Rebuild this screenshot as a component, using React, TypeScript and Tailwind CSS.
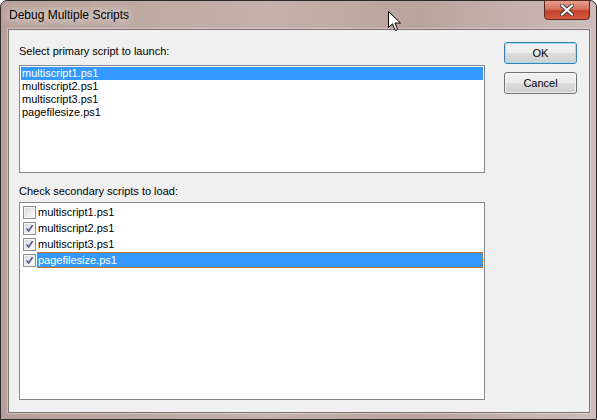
const primary = ['multiscript1.ps1', 'multiscript2.ps1', 'multiscript3.ps1', 'pagefilesize.ps1']

const secondary = [
  { name: 'multiscript1.ps1', checked: false },
  { name: 'multiscript2.ps1', checked: true },
  { name: 'multiscript3.ps1', checked: true },
  { name: 'pagefilesize.ps1', checked: true },
]

function Checkbox({ checked }: { checked: boolean }) {
  return (
    <span className="flex h-[13px] w-[13px] shrink-0 items-center justify-center border border-[#8e8f8f] bg-white">
      <span className="relative flex h-[11px] w-[11px] items-center justify-center border border-[#f4f4f4] bg-[linear-gradient(135deg,#dcdcdc,#fbfbfb)]">
        {checked && (
          <svg width="9" height="9" viewBox="0 0 9 9" className="absolute left-[0px] top-[0px]">
            <path d="M1.5 4.5 L3.6 7 L7.6 1.2" fill="none" stroke="#4a5f8d" strokeWidth="1.6" />
          </svg>
        )}
      </span>
    </span>
  )
}

function Button({ label, isDefault = false }: { label: string; isDefault?: boolean }) {
  return (
    <button
      className={`flex h-[22px] w-[73px] items-center justify-center rounded-[3px] border ${
        isDefault ? 'border-[#3c7fb1]' : 'border-[#707070]'
      } bg-[linear-gradient(#f2f2f2_0%,#ebebeb_50%,#dddddd_50%,#cfcfcf_100%)] p-0 text-[11px] leading-none text-black`}
    >
      <span
        className={`flex h-full w-full items-center justify-center rounded-[2px] border ${
          isDefault ? 'border-[#9fdcf6]' : 'border-[#fbfbfb]/70'
        }`}
      >
        {label}
      </span>
    </button>
  )
}

function Cursor() {
  return (
    <svg width="14" height="21" viewBox="0 0 14 21" className="absolute left-[387px] top-[10px]">
      <path
        d="M0.5 0.5 L0.5 16.5 L4.5 12.8 L7.2 19.5 L9.6 18.5 L7 12 L12.5 12 Z"
        fill="white"
        stroke="black"
        strokeWidth="1"
        strokeLinejoin="miter"
      />
    </svg>
  )
}

export default function App() {
  return (
    <div className="h-[420px] w-[597px] bg-white font-['Liberation_Sans',Arial,sans-serif]">
      <div className="relative flex h-full flex-col rounded-t-[7px] border border-[#2f2a29] bg-[linear-gradient(90deg,#b79f99_0%,#c5b1ab_45%,#bba39d_70%,#cdbcb8_100%)]">
        <div className="flex h-[28px] shrink-0 items-center pl-[8px] text-[12px] text-black">
          <span className="[text-shadow:0_0_6px_#e6dcd9,0_0_10px_#e6dcd9,0_0_14px_#ddd0cc]">
            Debug Multiple Scripts
          </span>
        </div>

        <div className="absolute right-[6px] top-[-1px] flex h-[20px] w-[46px] items-center justify-center rounded-b-[4px] border border-[#5a2a22] bg-[linear-gradient(#e8a090_0%,#d4735f_45%,#c2402a_55%,#d65a3e_100%)]">
          <svg width="14" height="12" viewBox="0 0 14 12">
            <path d="M2 1.5 L12 10.5 M12 1.5 L2 10.5" stroke="#3a3a3a" strokeWidth="4" strokeLinecap="round" />
            <path d="M2 1.5 L12 10.5 M12 1.5 L2 10.5" stroke="#ffffff" strokeWidth="2.2" strokeLinecap="round" />
          </svg>
        </div>

        <div className="mb-[6px] ml-[7px] mr-[6px] flex flex-1 border border-[#7d716f] bg-[#f0f0f0] shadow-[0_0_0_1px_rgba(255,255,255,0.35)]">
          <div className="ml-[10px] flex w-[466px] flex-col pt-[15px] text-[11px] leading-[13px] text-black">
            <div>Select primary script to launch:</div>
            <div className="mt-[7px] h-[108px] border border-[#828790] bg-white p-[1px]">
              {primary.map((name, i) => (
                <div
                  key={name}
                  className={`h-[13px] pl-[1px] leading-[13px] ${i === 0 ? 'bg-[#3399ff] text-white' : ''}`}
                >
                  {name}
                </div>
              ))}
            </div>

            <div className="mt-[12px]">Check secondary scripts to load:</div>
            <div className="mt-[4px] h-[198px] border border-[#828790] bg-white p-[1px]">
              {secondary.map((item, i) => (
                <div key={item.name} className="flex h-[16px] items-center pl-[2px]">
                  <Checkbox checked={item.checked} />
                  <span
                    className={`ml-[1px] flex h-[16px] flex-1 items-center ${
                      i === 3 ? 'border border-dotted border-[#c86a1e] bg-[#3399ff] text-white' : 'pl-[1px]'
                    }`}
                  >
                    {item.name}
                  </span>
                </div>
              ))}
            </div>
          </div>

          <div className="ml-[19px] flex flex-col gap-[8px] pt-[12px]">
            <Button label="OK" isDefault />
            <Button label="Cancel" />
          </div>
        </div>

        <Cursor />
      </div>
    </div>
  )
}
